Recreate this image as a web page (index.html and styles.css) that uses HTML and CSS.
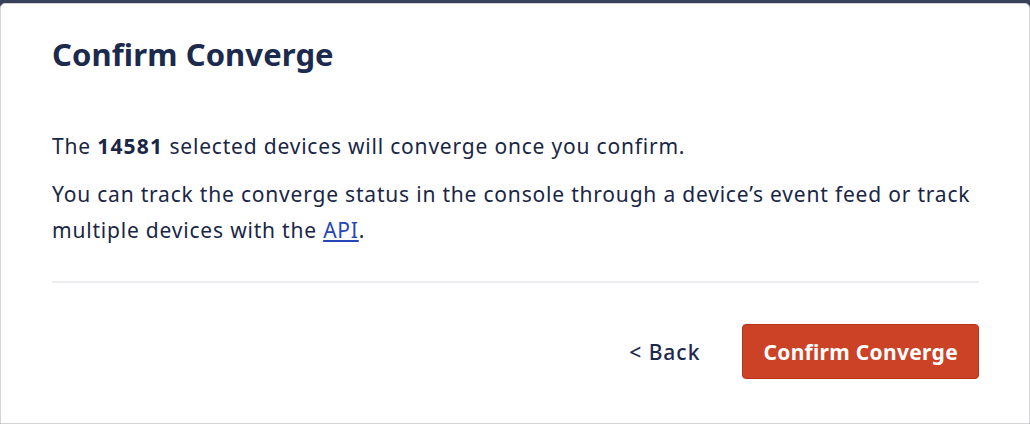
FILE: index.html
```html
<!DOCTYPE html>
<html>
<head>
<meta charset="utf-8">
<link rel="stylesheet" href="styles.css">
</head>
<body>
<div class="modal">
  <h1 class="title">Confirm Converge</h1>
  <div class="content">
    <p class="para">The <strong>14581</strong> selected devices will converge once you confirm.</p>
    <p class="para">You can track the converge status in the console through a device’s event feed or track multiple devices with the <a class="link" href="#">API</a>.</p>
  </div>
  <div class="divider"></div>
  <div class="actions">
    <button class="btn-back">&lt; Back</button>
    <button class="btn-confirm">Confirm Converge</button>
  </div>
</div>
</body>
</html>
```
FILE: styles.css
```css
html, body {
  margin: 0;
  padding: 0;
  height: 100%;
}
body {
  background: #37415c;
  font-family: "Noto Sans", "Open Sans", sans-serif;
  color: #1a2645;
  padding-top: 3px;
  box-sizing: border-box;
}
.modal {
  background: #fff;
  border: 1px solid #d4d4d8;
  border-radius: 5px 5px 0 0;
  height: 100%;
  box-sizing: border-box;
  padding: 28px 50px 0 51px;
}
.title {
  margin: 0;
  font-size: 31px;
  font-weight: 700;
  line-height: 44px;
  color: #1c2a4d;
  letter-spacing: 0.1px;
}
.content {
  margin-top: 52px;
}
.para {
  margin: 0 0 12px 0;
  font-size: 21px;
  line-height: 36px;
  letter-spacing: 0.8px;
}
.para strong {
  font-weight: 700;
  letter-spacing: 1.2px;
}
.link {
  color: #2545b8;
  text-decoration: underline;
}
.divider {
  height: 2px;
  background: #ebebf0;
  margin-top: 33px;
}
.actions {
  display: flex;
  justify-content: flex-end;
  align-items: center;
  gap: 42px;
  margin-top: 41px;
}
.btn-back {
  background: none;
  border: none;
  padding: 0;
  font-family: inherit;
  font-size: 21px;
  font-weight: 500;
  letter-spacing: 1px;
  color: #1c2a4d;
  cursor: pointer;
}
.btn-confirm {
  background: #cc4226;
  border: 1px solid #b83218;
  border-radius: 4px;
  color: #fff;
  font-family: inherit;
  font-size: 21px;
  font-weight: 700;
  letter-spacing: 0.3px;
  height: 55px;
  padding: 0 20px;
  cursor: pointer;
}
```
